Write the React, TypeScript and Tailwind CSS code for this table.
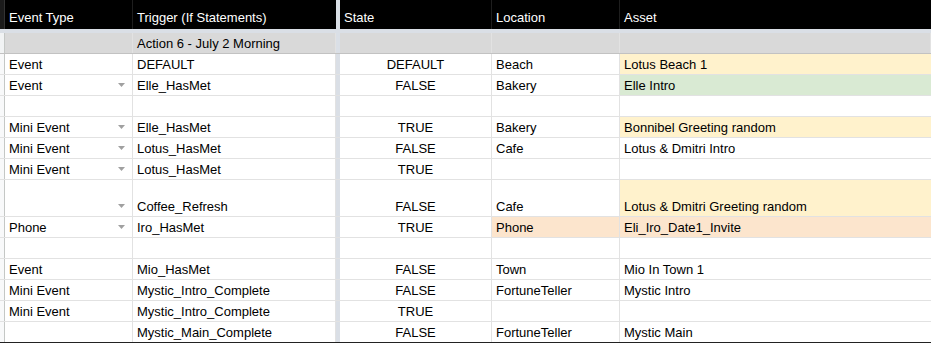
import React from 'react';

type Row = {
  type?: string;
  arrow?: boolean;
  trigger?: string;
  state?: string;
  location?: string;
  locBg?: string;
  asset?: string;
  assetBg?: string;
  tall?: boolean;
};

const rows: Row[] = [
  { type: 'Event', trigger: 'DEFAULT', state: 'DEFAULT', location: 'Beach', asset: 'Lotus Beach 1', assetBg: 'bg-[#fff2cc]' },
  { type: 'Event', arrow: true, trigger: 'Elle_HasMet', state: 'FALSE', location: 'Bakery', asset: 'Elle Intro', assetBg: 'bg-[#d9ead3]' },
  {},
  { type: 'Mini Event', arrow: true, trigger: 'Elle_HasMet', state: 'TRUE', location: 'Bakery', asset: 'Bonnibel Greeting random', assetBg: 'bg-[#fff2cc]' },
  { type: 'Mini Event', arrow: true, trigger: 'Lotus_HasMet', state: 'FALSE', location: 'Cafe', asset: 'Lotus & Dmitri Intro' },
  { type: 'Mini Event', arrow: true, trigger: 'Lotus_HasMet', state: 'TRUE' },
  { arrow: true, trigger: 'Coffee_Refresh', state: 'FALSE', location: 'Cafe', asset: 'Lotus & Dmitri Greeting random', assetBg: 'bg-[#fff2cc]', tall: true },
  { type: 'Phone', arrow: true, trigger: 'Iro_HasMet', state: 'TRUE', location: 'Phone', locBg: 'bg-[#fce5cd]', asset: 'Eli_Iro_Date1_Invite', assetBg: 'bg-[#fce5cd]' },
  {},
  { type: 'Event', trigger: 'Mio_HasMet', state: 'FALSE', location: 'Town', asset: 'Mio In Town 1' },
  { type: 'Mini Event', trigger: 'Mystic_Intro_Complete', state: 'FALSE', location: 'FortuneTeller', asset: 'Mystic Intro' },
  { type: 'Mini Event', trigger: 'Mystic_Intro_Complete', state: 'TRUE' },
  { trigger: 'Mystic_Main_Complete', state: 'FALSE', location: 'FortuneTeller', asset: 'Mystic Main' },
];

const cols = 'grid grid-cols-[5px_128px_203px_4px_152px_128px_1fr]';
const cell = 'flex items-end px-[4px] pb-[1px] border-r border-[#e2e2e2] overflow-hidden whitespace-nowrap';

function Arrow() {
  return (
    <svg width="7" height="4" viewBox="0 0 7 4" className="ml-auto mb-[7px] mr-[3px] shrink-0">
      <path d="M0 0 L7 0 L3.5 4 Z" fill="#a0a0a0" />
    </svg>
  );
}

export default function App() {
  return (
    <div
      className="w-[931px] h-[343px] overflow-hidden bg-white text-[13px] leading-[16px] text-black"
      style={{ fontFamily: '"Liberation Sans", Arial, sans-serif' }}
    >
      {/* header */}
      <div className={`${cols} h-[29px] bg-black text-white`}>
        <div className="bg-[#1b1b1b] border-r border-[#333]" />
        <div className="flex items-end px-[4px] pb-[3px] border-r border-[#1e1e1e]">Event Type</div>
        <div className="flex items-end px-[4px] pb-[3px]">Trigger (If Statements)</div>
        <div className="bg-[#dadfe6]" />
        <div className="flex items-end px-[4px] pb-[3px] border-r border-[#1e1e1e]">State</div>
        <div className="flex items-end px-[4px] pb-[3px] border-r border-[#1e1e1e]">Location</div>
        <div className="flex items-end px-[4px] pb-[3px]">Asset</div>
      </div>
      <div className={`${cols} h-[4px] bg-[#dadfe6]`} />

      {/* section row */}
      <div className={`${cols} h-[21px] bg-[#d9d9d9] border-b border-[#c2c2c2]`}>
        <div className="bg-[#f1f3f4] border-r border-[#c4c7c5]" />
        <div className={`${cell} border-[#c9c9c9]`} />
        <div className={`${cell} border-[#c9c9c9]`}>Action 6 - July 2 Morning</div>
        <div className="bg-[#dadfe6]" />
        <div className={`${cell} border-[#c9c9c9]`} />
        <div className={`${cell} border-[#c9c9c9]`} />
        <div className={`${cell} border-[#c9c9c9]`} />
      </div>

      {rows.map((r, i) => {
        const last = i === rows.length - 1;
        return (
          <div
            key={i}
            className={`${cols} ${r.tall ? 'h-[37px]' : 'h-[21px]'} border-b ${last ? 'border-[#222]' : 'border-[#e2e2e2]'}`}
          >
            <div className="bg-[#f8f9fa] border-r border-[#c4c7c5]" />
            <div className={cell}>
              <span>{r.type}</span>
              {r.arrow && <Arrow />}
            </div>
            <div className={cell}>{r.trigger}</div>
            <div className="bg-[#dadfe6]" />
            <div className={`${cell} justify-center`}>{r.state}</div>
            <div className={`${cell} ${r.locBg ?? ''}`}>{r.location}</div>
            <div className={`${cell} border-r-0 ${r.assetBg ?? ''}`}>{r.asset}</div>
          </div>
        );
      })}
    </div>
  );
}
